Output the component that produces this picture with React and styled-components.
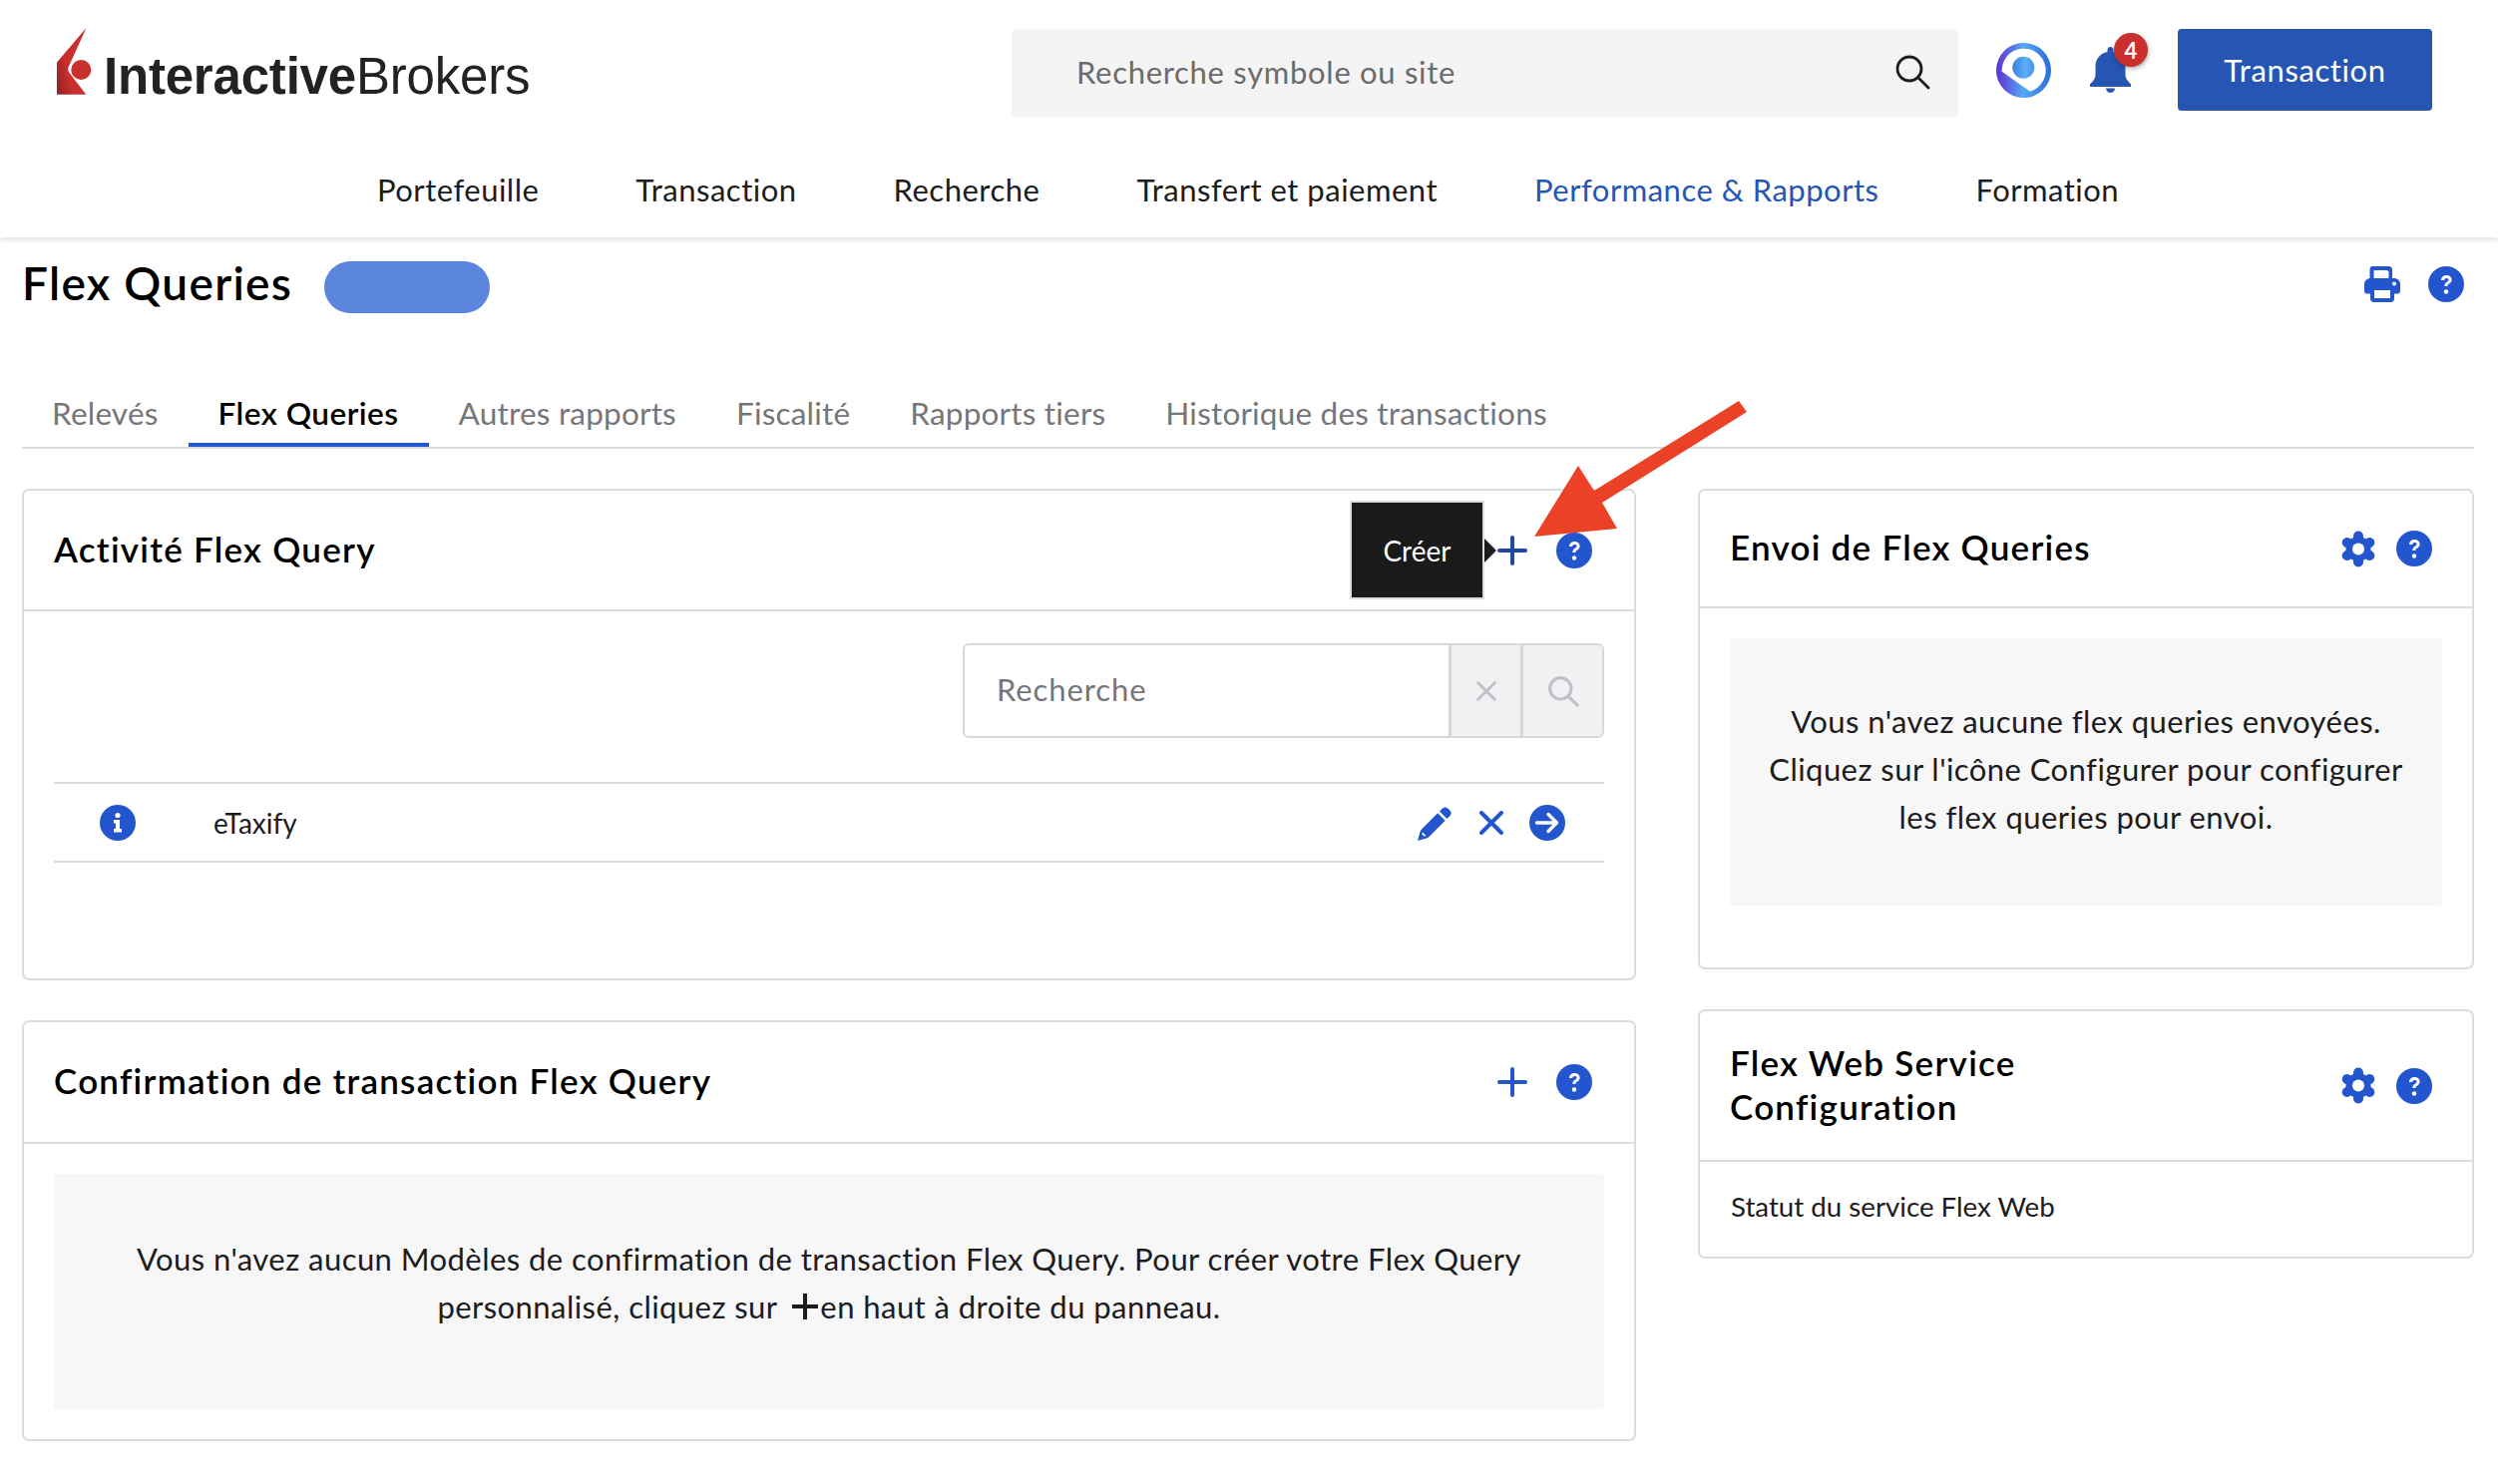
import React from "react";
import styled, { createGlobalStyle } from "styled-components";

const BLUE = "#2356ce";
const FONT = '"Lato", "Noto Sans", "Liberation Sans", sans-serif';

const GlobalStyle = createGlobalStyle`
  html, body {
    margin: 0;
    padding: 0;
    background: #fff;
    color: #1c1c1e;
    font-family: ${FONT};
  }
  * { box-sizing: border-box; }
`;

const Page = styled.div`
  position: relative;
  width: 2504px;
  height: 1488px;
  overflow: hidden;
  background: #fff;
`;

const TopBar = styled.header`
  height: 238px;
  background: #fff;
  box-shadow: 0 2px 6px rgba(0, 0, 0, 0.14);
  padding: 29px 0 0 57px;
`;

const BrandRow = styled.div`
  display: flex;
  align-items: flex-start;
  height: 92px;
`;

const Logo = styled.div`
  display: flex;
  align-items: flex-end;
  gap: 12px;
  width: 957px;
  height: 67px;
  margin-top: -1px;
`;

const LogoText = styled.span`
  font-family: "Liberation Sans", Arial, sans-serif;
  font-size: 51px;
  line-height: 37px;
  height: 37px;
  letter-spacing: -0.2px;
  color: #222;
  font-weight: ${(p) => (p.$bold ? 700 : 400)};
`;

const LogoWord = styled.div`
  display: flex;
`;

const SiteSearch = styled.div`
  display: flex;
  align-items: center;
  justify-content: space-between;
  width: 949px;
  height: 88px;
  padding: 0 28px 3px 65px;
  background: #f4f4f4;
  border-radius: 5px;
  font-size: 31px;
  letter-spacing: 0.7px;
  color: #6b6b6b;
`;

const Alerts = styled.div`
  display: flex;
  align-items: flex-start;
  margin-left: 38px;
`;

const AssistantWrap = styled.div`
  display: flex;
  margin-top: 14px;
`;

const BellWrap = styled.div`
  position: relative;
  width: 41px;
  height: 46px;
  margin: 18px 0 0 39px;
`;

const Badge = styled.span`
  position: absolute;
  top: -14px;
  left: 24px;
  width: 34px;
  height: 34px;
  border-radius: 50%;
  background: #c92f2d;
  color: #fff;
  font-size: 22px;
  font-weight: 700;
  display: flex;
  align-items: center;
  justify-content: center;
  box-shadow: 1px 2px 4px rgba(0, 0, 0, 0.3);
`;

const TradeButton = styled.button`
  width: 255px;
  height: 82px;
  margin-left: 47px;
  border: none;
  border-radius: 4px;
  background: #2655b3;
  color: #fff;
  font-family: ${FONT};
  font-size: 31px;
  letter-spacing: 0.6px;
`;

const MainNav = styled.nav`
  display: flex;
  gap: 97px;
  padding: 47px 0 0 321px;
`;

const NavItem = styled.a`
  font-size: 31px;
  line-height: 44px;
  letter-spacing: 0.5px;
  color: ${(p) => (p.$active ? "#2655b3" : "#1c1c1e")};
`;

const Content = styled.main`
  padding: 24px 24px 0 22px;
`;

const TitleRow = styled.div`
  display: flex;
  align-items: center;
  height: 52px;
`;

const PageTitle = styled.h1`
  margin: 0 0 8px 0;
  font-size: 46px;
  line-height: 52px;
  font-weight: 600;
  letter-spacing: 1.3px;
  color: #000;
`;

const Pill = styled.div`
  width: 166px;
  height: 52px;
  margin-left: 32px;
  border-radius: 26px;
  background: #5b85dc;
`;

const TitleTools = styled.div`
  display: flex;
  align-items: center;
  gap: 28px;
  margin: 0 10px 6px auto;
`;

const Tabs = styled.div`
  display: flex;
  height: 76px;
  margin-top: 60px;
  border-bottom: 2px solid #dcdcdc;
`;

const Tab = styled.a`
  padding: 0 30px;
  font-size: 31.5px;
  line-height: 81px;
  letter-spacing: ${(p) => (p.$active ? 0.5 : 0.2)}px;
  font-weight: ${(p) => (p.$active ? 600 : 400)};
  color: ${(p) => (p.$active ? "#000" : "#76767a")};
  border-bottom: 4px solid ${(p) => (p.$active ? BLUE : "transparent")};
  height: 74px;
`;

const Columns = styled.div`
  display: grid;
  grid-template-columns: 1618px 778px;
  column-gap: 62px;
  margin-top: 40px;
`;

const Column = styled.div`
  display: flex;
  flex-direction: column;
  gap: 40px;
`;

const Card = styled.section`
  position: relative;
  border: 2px solid #dcdcdc;
  border-radius: 7px;
  height: ${(p) => p.$height}px;
  background: #fff;
`;

const CardHead = styled.div`
  display: flex;
  align-items: center;
  height: ${(p) => p.$height}px;
  padding: 0 ${(p) => p.$right}px 0 30px;
  border-bottom: 2px solid #dcdcdc;
`;

const CardTitle = styled.h2`
  margin: 0 0 4px;
  flex: 1;
  font-size: 35px;
  line-height: 44px;
  font-weight: 600;
  letter-spacing: 1.25px;
  color: #000;
`;

const CardTools = styled.div`
  display: flex;
  align-items: center;
  gap: ${(p) => p.$gap}px;
`;

const Tooltip = styled.div`
  position: absolute;
  top: 10px;
  left: 1329px;
  width: 135px;
  height: 99px;
  border: 2px solid #dcdcdc;
  background: #1a1a1a;
  color: #fff;
  font-size: 28px;
  display: flex;
  align-items: center;
  justify-content: center;

  &::after {
    content: "";
    position: absolute;
    left: 133px;
    top: 36px;
    border-style: solid;
    border-width: 12px 0 12px 12px;
    border-color: transparent transparent transparent #1a1a1a;
  }
`;

const SearchRow = styled.div`
  display: flex;
  justify-content: flex-end;
  padding: 32px 30px 0 0;
`;

const SearchGroup = styled.div`
  display: flex;
  width: 643px;
  height: 95px;
  border: 2px solid #d8d8d8;
  border-radius: 6px;
  overflow: hidden;
`;

const SearchInput = styled.div`
  flex: 1;
  padding: 0 0 3px 32px;
  display: flex;
  align-items: center;
  font-size: 31px;
  letter-spacing: 0.9px;
  color: #76767a;
  border-right: 3px solid #d8d8d8;
`;

const SearchButton = styled.div`
  width: ${(p) => p.$width}px;
  display: flex;
  align-items: center;
  justify-content: center;
  background: #f0f1f3;
  border-left: ${(p) => (p.$divided ? "3px solid #d8d8d8" : "none")};
`;

const QueryRow = styled.div`
  display: flex;
  align-items: center;
  height: 81px;
  margin: 44px 30px 0;
  border-top: 2px solid #dcdcdc;
  border-bottom: 2px solid #dcdcdc;
  padding: 0 39px 0 46px;
`;

const QueryName = styled.span`
  margin-left: 78px;
  margin-right: auto;
  font-size: 28px;
  color: #1c1c1e;
`;

const RowTools = styled.div`
  display: flex;
  align-items: center;
  gap: 26px;
`;

const EmptyPanel = styled.div`
  display: flex;
  align-items: center;
  justify-content: center;
  text-align: center;
  margin: ${(p) => p.$margin};
  height: ${(p) => p.$height}px;
  padding: ${(p) => p.$padding};
  background: #f7f7f7;
  border-radius: 4px;
  font-size: 31px;
  line-height: 48px;
  letter-spacing: 0.45px;
  color: #1c1c1e;
`;

const InlinePlus = styled.span`
  display: inline-block;
  width: 26px;
  height: 26px;
  margin: 0 2px 0 7px;
  vertical-align: -1px;
  background: linear-gradient(#1c1c1e, #1c1c1e) center / 100% 4px no-repeat,
    linear-gradient(#1c1c1e, #1c1c1e) center / 4px 100% no-repeat;
`;

const StatusLine = styled.div`
  padding: 27px 0 0 31px;
  font-size: 27.7px;
  line-height: 36px;
  color: #1c1c1e;
`;

const ArrowOverlay = styled.svg`
  position: absolute;
  left: 0;
  top: 0;
  pointer-events: none;
`;

const HelpIcon = () => (
  <svg width="36" height="36" viewBox="0 0 36 36">
    <circle cx="18" cy="18" r="18" fill={BLUE} />
    <path d="M13 14c0-3 2.4-5 5.4-5 3 0 5.200 1.800 5.200 4.500 0 2.200-1.300 3.300-2.800 4.200-1 .6-1.400 1.100-1.400 2.300h-3c0-2.100.7-3.200 2.300-4.200 1.300-.8 1.900-1.300 1.900-2.200 0-1-.9-1.700-2.100-1.700-1.300 0-2.200.8-2.400 2.100z" fill="#fff" />
    <circle cx="18" cy="25.5" r="2.2" fill="#fff" />
  </svg>
);

const InfoIcon = () => (
  <svg width="36" height="36" viewBox="0 0 36 36">
    <circle cx="18" cy="18" r="18" fill={BLUE} />
    <circle cx="18" cy="10.5" r="2.6" fill="#fff" />
    <path d="M14 15h6v9h2v3.500h-8V24h2v-5.500h-2z" fill="#fff" />
  </svg>
);

const PlusIcon = ({ color = BLUE }) => (
  <svg width="30" height="30" viewBox="0 0 30 30">
    <path d="M15 2v26M2 15h26" stroke={color} strokeWidth="4" strokeLinecap="round" fill="none" />
  </svg>
);

const GearIcon = () => (
  <svg width="36" height="37" viewBox="0 0 36 37">
    <g stroke={BLUE} strokeWidth="10" strokeLinecap="round">
      <path d="M18 5.500v26" />
      <path d="M6.700 12l22.600 13" />
      <path d="M29.300 12L6.700 25" />
    </g>
    <circle cx="18" cy="18.500" r="12.500" fill={BLUE} />
    <circle cx="18" cy="18.500" r="6" fill="#fff" />
  </svg>
);

const PencilIcon = () => (
  <svg width="36" height="36" viewBox="0 0 36 36">
    <path fill={BLUE} d="M25 3.500c1.500-1.500 3.800-1.500 5.200 0l2.300 2.300c1.500 1.500 1.500 3.800 0 5.200l-3 3-7.500-7.500zM20.200 8.300l7.500 7.500L11.500 32c-.7.700-1.500 1.200-2.500 1.500L0 36l2.500-9c.3-1 .8-1.800 1.500-2.500z" />
    <path fill="#fff" d="M5 27.500l3.500 3.500-2 .6-2.100-2.100z" />
  </svg>
);

const CloseIcon = ({ color = BLUE, size = 24, weight = 4 }) => (
  <svg width={size} height={size} viewBox="0 0 24 24">
    <path d="M2 2l20 20M22 2L2 22" stroke={color} strokeWidth={weight} strokeLinecap="round" fill="none" />
  </svg>
);

const GoIcon = () => (
  <svg width="36" height="36" viewBox="0 0 36 36">
    <circle cx="18" cy="18" r="18" fill={BLUE} />
    <path d="M7.500 18h20M19 9.500l8.500 8.500-8.500 8.500" stroke="#fff" strokeWidth="3.4" strokeLinecap="round" strokeLinejoin="round" fill="none" />
  </svg>
);

const SearchIcon = ({ color, size, weight }) => (
  <svg width={size} height={size} viewBox="0 0 36 36">
    <circle cx="15" cy="15" r="12" stroke={color} strokeWidth={weight} fill="none" />
    <path d="M24 24l10 10" stroke={color} strokeWidth={weight} strokeLinecap="round" />
  </svg>
);

const PrinterIcon = () => (
  <svg width="36" height="36" viewBox="0 0 36 36">
    <path fill={BLUE} fillRule="evenodd" d="M8 0h16.500c2 0 3.500 1.500 3.500 3.500V12h2c3 0 6 2.500 6 5.500V25c0 1.500-1 2.500-2.500 2.500H30v5c0 2-1.500 3.500-3.500 3.500h-17C7.500 36 6 34.500 6 32.500v-5H2.500C1 27.500 0 26.500 0 25v-7.500C0 14.500 3 12 6 12h-.5V3C5.500 1.500 6.500 0 8 0zm1.500 4v8h15V5.500L23 4zM10 24v8h16v-8zm20-8.500a2 2 0 1 0 0 4 2 2 0 0 0 0-4z" />
  </svg>
);

const BrandMark = () => (
  <svg width="35" height="67" viewBox="0 0 35 67">
    <defs>
      <linearGradient id="brandFade" x1="0" y1="1" x2="0.7" y2="0.6">
        <stop offset="0" stopColor="#8f1f22" />
        <stop offset="0.6" stopColor="#c92f2d" />
      </linearGradient>
    </defs>
    <path d="M29.500 0L0 34.500V66.700h29.300L12.500 45c-1-1.500-1.600-3-1.200-5z" fill="url(#brandFade)" />
    <circle cx="24.300" cy="42" r="10" fill="#c92f2d" />
  </svg>
);

const AssistantMark = () => (
  <svg width="55" height="55" viewBox="0 0 55 55">
    <defs>
      <linearGradient id="ringFade" x1="0" y1="0" x2="1" y2="0">
        <stop offset="0" stopColor="#5f2fd1" />
        <stop offset="0.5" stopColor="#55aaf5" />
        <stop offset="1" stopColor="#2a6bd8" />
      </linearGradient>
      <linearGradient id="dotFade" x1="0" y1="0" x2="1" y2="0">
        <stop offset="0" stopColor="#3d7fe0" />
        <stop offset="0.6" stopColor="#5ab0f7" />
        <stop offset="1" stopColor="#4a90e8" />
      </linearGradient>
    </defs>
    <circle cx="27.500" cy="27.500" r="27.500" fill="url(#ringFade)" />
    <path d="M5.700 28.700L34 48.700A22 22 0 1 0 5.700 28.700z" fill="#fff" />
    <circle cx="27.300" cy="24.700" r="11" fill="url(#dotFade)" />
  </svg>
);

const BellIcon = () => (
  <svg width="41" height="46" viewBox="0 0 41 46">
    <path fill="#2655b3" d="M20.500 0c1.800 0 3 1.200 3 3v2c7 1.500 12 7 12 14.500V28c0 3.500 2 6 5.500 9.500V40H0v-2.500C3.500 34 5.500 31.500 5.500 28v-8.500C5.500 12 10.500 6.500 17.500 5V3c0-1.800 1.200-3 3-3z" />
    <path fill="#2655b3" d="M16 41.500h9c0 2.600-2 4.500-4.500 4.500S16 44.100 16 41.500z" />
  </svg>
);

export default function App() {
  const navItems = ["Portefeuille", "Transaction", "Recherche", "Transfert et paiement", "Performance & Rapports", "Formation"];
  const tabs = ["Relevés", "Flex Queries", "Autres rapports", "Fiscalité", "Rapports tiers", "Historique des transactions"];

  return (
    <Page>
      <GlobalStyle />
      <TopBar>
        <BrandRow>
          <Logo>
            <BrandMark />
            <LogoWord>
              <LogoText $bold>Interactive</LogoText>
              <LogoText>Brokers</LogoText>
            </LogoWord>
          </Logo>
          <SiteSearch>
            <span>Recherche symbole ou site</span>
            <SearchIcon color="#1c1c1e" size={36} weight={2.8} />
          </SiteSearch>
          <Alerts>
            <AssistantWrap>
              <AssistantMark />
            </AssistantWrap>
            <BellWrap>
              <BellIcon />
              <Badge>4</Badge>
            </BellWrap>
            <TradeButton>Transaction</TradeButton>
          </Alerts>
        </BrandRow>
        <MainNav>
          {navItems.map((item) => (
            <NavItem key={item} $active={item === "Performance & Rapports"}>{item}</NavItem>
          ))}
        </MainNav>
      </TopBar>

      <Content>
        <TitleRow>
          <PageTitle>Flex Queries</PageTitle>
          <Pill />
          <TitleTools>
            <PrinterIcon />
            <HelpIcon />
          </TitleTools>
        </TitleRow>

        <Tabs>
          {tabs.map((tab) => (
            <Tab key={tab} $active={tab === "Flex Queries"}>{tab}</Tab>
          ))}
        </Tabs>

        <Columns>
          <Column>
            <Card $height={493}>
              <CardHead $height={121} $right={42}>
                <CardTitle>Activité Flex Query</CardTitle>
                <CardTools $gap={29}>
                  <PlusIcon color="#1f4a9c" />
                  <HelpIcon />
                </CardTools>
              </CardHead>
              <Tooltip>Créer</Tooltip>
              <SearchRow>
                <SearchGroup>
                  <SearchInput>Recherche</SearchInput>
                  <SearchButton $width={69}><CloseIcon color="#bfc1c6" size={20} weight={3.5} /></SearchButton>
                  <SearchButton $width={82} $divided><SearchIcon color="#bfc1c6" size={32} weight={3.5} /></SearchButton>
                </SearchGroup>
              </SearchRow>
              <QueryRow>
                <InfoIcon />
                <QueryName>eTaxify</QueryName>
                <RowTools>
                  <PencilIcon />
                  <CloseIcon />
                  <GoIcon />
                </RowTools>
              </QueryRow>
            </Card>
            <Card $height={422}>
              <CardHead $height={122} $right={42}>
                <CardTitle>Confirmation de transaction Flex Query</CardTitle>
                <CardTools $gap={29}>
                  <PlusIcon />
                  <HelpIcon />
                </CardTools>
              </CardHead>
              <EmptyPanel $margin="30px 30px 0" $height={236} $padding="0 60px 18px">
                <div>
                  Vous n'avez aucun Modèles de confirmation de transaction Flex Query. Pour créer votre Flex Query personnalisé, cliquez sur <InlinePlus />en haut à droite du panneau.
                </div>
              </EmptyPanel>
            </Card>
          </Column>
          <Column>
            <Card $height={482}>
              <CardHead $height={118} $right={40}>
                <CardTitle>Envoi de Flex Queries</CardTitle>
                <CardTools $gap={20}>
                  <GearIcon />
                  <HelpIcon />
                </CardTools>
              </CardHead>
              <EmptyPanel $margin="30px 30px 0" $height={268} $padding="0 30px 6px">
                <div>
                  Vous n'avez aucune flex queries envoyées. Cliquez sur l'icône Configurer pour configurer les flex queries pour envoi.
                </div>
              </EmptyPanel>
            </Card>
            <Card $height={250}>
              <CardHead $height={151} $right={40}>
                <CardTitle>Flex Web Service<br />Configuration</CardTitle>
                <CardTools $gap={20}>
                  <GearIcon />
                  <HelpIcon />
                </CardTools>
              </CardHead>
              <StatusLine>Statut du service Flex Web</StatusLine>
            </Card>
          </Column>
        </Columns>
      </Content>

      <ArrowOverlay width="2504" height="1488" viewBox="0 0 2504 1488">
        <polygon fill="#eb4227" points="1538,538 1582,467 1598,492 1743,402 1751,413 1606,504 1621,530" />
      </ArrowOverlay>
    </Page>
  );
}
